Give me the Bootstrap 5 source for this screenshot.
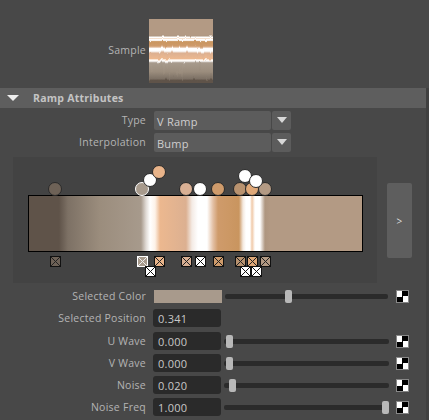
<!DOCTYPE html>
<html lang="en">
<head>
<meta charset="UTF-8">
<meta name="viewport" content="width=device-width, initial-scale=1.0">
<title>Ramp Attributes</title>
<link href="https://cdn.jsdelivr.net/npm/bootstrap@5.3.0/dist/css/bootstrap.min.css" rel="stylesheet">
<style>
    body { background: #484848; color: #b4b4b4; font-family: "Open Sans", "Liberation Sans", sans-serif; font-size: 10.5px; line-height: 1; letter-spacing: .25px; width: 429px; height: 420px; overflow: hidden; }
    .lbl { width: 146px; flex: none; text-align: right; }
    .sample-row { padding-top: 13px; height: 88px; }
    .sample-box { width: 64px; height: 64px; margin-left: 3px; display: block; }
    .lower { width: 429px; height: 332px; border-right: 3px solid #404040; }
    .attr-head { width: 426px; height: 20px; background: #5e5e5e; color: #c4c4c4; font-weight: 700; }
    .attr-head i { display: block; margin: 0 14px 0 7px; border: 6px solid transparent; border-top: 6px solid #eee; border-bottom: 0; border-left-width: 6.5px; border-right-width: 6.5px; }
    .drop-row { height: 19px; margin-top: 3px; }
    .drop-val { width: 117px; height: 19px; margin-left: 8px; padding: 2px 0 0 3px; background: #5c5c5c; border-radius: 2px; color: #cfcfcf; font-size: 11px; }
    .drop-btn { width: 19px; height: 19px; margin-left: 1px; background: #5c5c5c; border-radius: 2px; }
    .drop-btn i { display: block; border-left: 5px solid transparent; border-right: 5px solid transparent; border-top: 6px solid #d8d8d8; margin-bottom: 2px; }
    .ramp-wrap { margin: 5px 0 0 13px; height: 126px; }
    .ramp-box { width: 364px; height: 126px; background: #434343; position: relative; }
    .ramp-bar { position: absolute; left: 15px; top: 38px; width: 335px; height: 57px; border: 1px solid #000; }
    .hnd { position: absolute; width: 14px; height: 14px; margin: -7px 0 0 -7px; border-radius: 50%; border: 1px solid #2a2a2a; }
    .hnd.sel { border-color: #fff; }
    .sq { position: absolute; width: 11px; height: 11px; margin: -5.5px 0 0 -5.5px; border: 1px solid #111; }
    .sq.sel { border-color: #fff; }
    .sq svg { display: block; width: 9px; height: 9px; }
    .go-btn { width: 25px; height: 75px; margin: 26px 0 0 10px; background: #5e5e5e; border-radius: 2px; color: #ddd; font-size: 10px; }
    .at-row { height: 18px; }
    .at-row.short { height: 13px; }
    .at-val { width: 68px; height: 18px; margin-left: 7px; padding: 1px 0 0 5px; background: #2a2a2a; border-radius: 3px; color: #c8c8c8; font-size: 11px; }
    .at-swatch { width: 68px; height: 13px; margin-left: 8px; background: #a89a8c; }
    .slide { width: 165px; height: 5px; margin-left: 3px; background: #2b2b2b; border-radius: 2px; position: relative; }
    .short .slide { width: 163px; }
    .slide b { position: absolute; top: -4px; width: 7px; height: 13px; background: #b8b8b8; border-radius: 2px; }
    .chk { width: 13px; height: 13px; margin-left: 7px; border: 1px solid #888; background: conic-gradient(#000 25%, #fff 0 50%, #000 0 75%, #fff 0); }
    .short .chk { margin-left: 8px; }
</style>
</head>
<body class="m-0">

    <div class="sample-row d-flex align-items-center">
        <div class="lbl">Sample</div>
        <svg class="sample-box" viewBox="0 0 64 64">
            <defs>
                <linearGradient id="rampV" x1="0" y1="1" x2="0" y2="0"></linearGradient>
                <filter id="wob" x="0" y="0" width="100%" height="100%">
                    <feTurbulence type="fractalNoise" baseFrequency="0.25 0.05" numOctaves="2" seed="4"/>
                    <feDisplacementMap in="SourceGraphic" scale="3" xChannelSelector="G" yChannelSelector="R"/>
                </filter>
            </defs>
            <rect x="-4" y="-4" width="72" height="72" fill="url(#rampV)" filter="url(#wob)"/>
        </svg>
    </div>

    <div class="lower">
        <div class="attr-head d-flex align-items-center"><i></i><span>Ramp Attributes</span></div>

        <div class="drop-row d-flex align-items-center">
            <div class="lbl">Type</div>
            <div class="drop-val d-flex align-items-center">V Ramp</div>
            <div class="drop-btn d-flex align-items-center justify-content-center"><i></i></div>
        </div>
        <div class="drop-row d-flex align-items-center">
            <div class="lbl">Interpolation</div>
            <div class="drop-val d-flex align-items-center">Bump</div>
            <div class="drop-btn d-flex align-items-center justify-content-center"><i></i></div>
        </div>

        <div class="ramp-wrap d-flex align-items-start">
            <div class="ramp-box" id="rampBox"><div class="ramp-bar" id="rampBar"></div></div>
            <div class="go-btn d-flex align-items-center justify-content-center">&gt;</div>
        </div>

        <div id="attrs" class="d-flex flex-column"></div>
    </div>

<script src="https://cdn.jsdelivr.net/npm/bootstrap@5.3.0/dist/js/bootstrap.bundle.min.js"></script>
<script>
    // gradient stops as page x of the bar (bar runs 29..362)
    const stops = [
        [29,'#5f5349'],[59,'#5f5349'],[68,'#7d7165'],[100,'#9b8d7d'],[141,'#a79a8c'],[146,'#e0dad5'],[150,'#fff'],[155,'#fdf2e8'],
        [160,'#ecb88f'],[186,'#dcb091'],[192,'#f4ebe5'],[198,'#fff'],[207,'#fff'],[213,'#e3c0a5'],[218,'#cf9b6b'],[239,'#c9955f'],
        [243,'#f4e9df'],[246,'#fff'],[250,'#fff'],[252,'#f0c9a8'],[255,'#fff'],[260,'#fff'],[265,'#ae9680'],[270,'#b39a84'],[362,'#b39a84']
    ];
    const pct = x => ((x - 29) / 333 * 100).toFixed(2) + '%';
    document.getElementById('rampBar').style.background =
        'linear-gradient(to right,' + stops.map(s => s[1] + ' ' + pct(s[0])).join(',') + ')';
    document.getElementById('rampV').innerHTML =
        stops.map(s => `<stop offset="${pct(s[0])}" stop-color="${s[1]}"/>`).join('');

    // ramp handles: x, circle y, square y, colour (page coords)
    const handles = [
        [55,189,261.5,'#6e6257'],[142,189,261.5,'#a79a8c',1],[150,180,271.5,'#fff'],[159,172,261.5,'#e9b48a'],
        [186,189,261.5,'#d9b094'],[200,189,261.5,'#fff'],[218,189,261.5,'#cf9b6b'],[240,189,261.5,'#b8926f'],
        [252,189,261.5,'#dfa878'],[265,189,261.5,'#b39a84'],[245,176,271.5,'#fff'],[256,181,271.5,'#fff']
    ];
    const box = document.getElementById('rampBox');
    handles.forEach(h => {
        const cls = h[4] ? ' sel' : '';
        const left = h[0] - 13, col = h[3];
        const line = col === '#fff' ? '#111' : (h[4] ? '#eee' : '#222');
        box.insertAdjacentHTML('beforeend',
            `<div class="hnd${cls}" style="left:${left}px;top:${h[1] - 157}px;background:${col}"></div>
             <div class="sq${cls}" style="left:${left}px;top:${h[2] - 157}px;background:${col}">
               <svg viewBox="0 0 9 9"><path d="M0 0L9 9M9 0L0 9" stroke="${line}" stroke-width="1"/></svg>
             </div>`);
    });

    const attrs = [
        {name:'Selected Color', swatch:true, slide:0.37, top:7},
        {name:'Selected Position', val:'0.341', top:6},
        {name:'U Wave', val:'0.000', slide:0, top:5},
        {name:'V Wave', val:'0.000', slide:0, top:4},
        {name:'Noise', val:'0.020', slide:0.02, top:4},
        {name:'Noise Freq', val:'1.000', slide:1, top:4}
    ];
    const cont = document.getElementById('attrs');
    attrs.forEach(a => {
        const left = a.swatch ? '<div class="at-swatch"></div>' : `<div class="at-val d-flex align-items-center">${a.val}</div>`;
        const right = a.slide === undefined ? '' :
            `<div class="slide"><b style="left:${(2 + a.slide * 156).toFixed(1)}px"></b></div><div class="chk"></div>`;
        cont.insertAdjacentHTML('beforeend',
            `<div class="at-row d-flex align-items-center${a.swatch ? ' short' : ''}" style="margin-top:${a.top}px"><div class="lbl">${a.name}</div>${left}${right}</div>`);
    });
</script>
</body>
</html>
